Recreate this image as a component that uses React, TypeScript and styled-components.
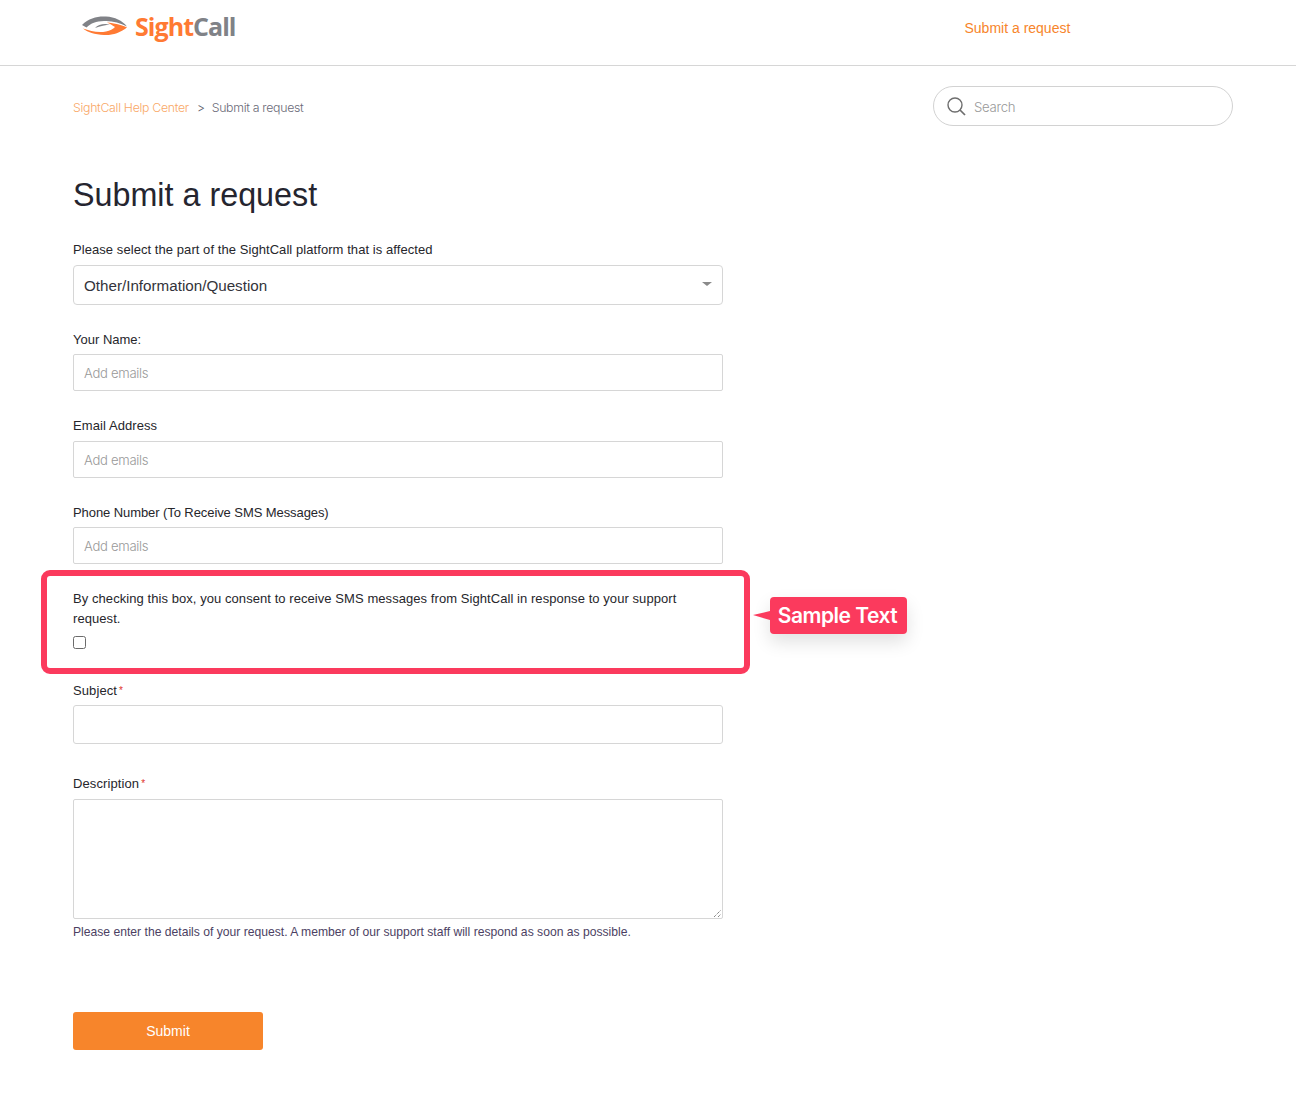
import React from "react";
import styled, { createGlobalStyle } from "styled-components";

const Global = createGlobalStyle`
  html, body { margin: 0; padding: 0; background: #fff; }
  body { font-family: "Liberation Sans", Arial, sans-serif; color: #26262b; }
  * { box-sizing: border-box; }
`;

const Page = styled.div`
  width: 1296px;
  height: 1096px;
  overflow: hidden;
`;

const Header = styled.header`
  height: 66px;
  border-bottom: 1px solid #d6d6d6;
  display: flex;
  align-items: flex-start;
  padding-left: 82px;
`;

const Logo = styled.a`
  display: flex;
  align-items: center;
  gap: 7px;
  height: 52px;
  width: 882.5px;
`;

const LogoText = styled.span`
  font-family: "Open Sans", sans-serif;
  font-weight: 700;
  font-size: 25px;
  letter-spacing: -0.95px;
  line-height: 30px;
  color: #ff7a33;
`;

const LogoGrey = styled.span`
  color: #808287;
`;

const NavLink = styled.a`
  font-size: 14px;
  line-height: 16px;
  color: #f7852b;
  margin-top: 20px;
`;

const Crumbs = styled.div`
  display: flex;
  justify-content: space-between;
  align-items: flex-start;
  padding: 20px 63px 0 73px;
`;

const Trail = styled.div`
  display: flex;
  align-items: center;
  font-family: Inter, sans-serif;
  font-weight: 300;
  font-size: 12.3px;
  height: 42px;
  letter-spacing: -0.3px;
`;

const CrumbLink = styled.a`
  color: #f9a867;
`;

const CrumbSep = styled.span`
  color: #5a5a68;
  margin: 0 7px 0 8px;
`;

const CrumbCurrent = styled.span`
  color: #6a6a78;
`;

const SearchBox = styled.div`
  width: 300px;
  height: 40px;
  border: 1px solid #d2d2d2;
  border-radius: 20px;
  display: flex;
  align-items: center;
  gap: 8px;
  padding-left: 13px;
`;

const SearchText = styled.span`
  font-family: Inter, sans-serif;
  font-weight: 300;
  font-size: 13.2px;
  letter-spacing: -0.3px;
  color: #999;
  position: relative;
  top: 1px;
`;

const Main = styled.main`
  padding: 0 0 0 73px;
  width: 723px;
`;

const Title = styled.h1`
  margin: 48px 0 0;
  font-weight: 400;
  font-size: 32.3px;
  line-height: 38px;
  color: #25252f;
`;

const Field = styled.div<{ $top: number }>`
  margin-top: ${(p) => p.$top}px;
`;

const Label = styled.label<{ $gap?: number; $track?: number }>`
  display: block;
  font-size: 13px;
  line-height: 15px;
  letter-spacing: ${(p) => p.$track ?? 0}px;
  color: #26262b;
  margin-bottom: ${(p) => p.$gap ?? 8}px;
`;

const Star = styled.span`
  color: #e0322b;
  font-size: 10px;
  margin-left: 2px;
  vertical-align: 1px;
`;

const SelectBox = styled.div`
  height: 40px;
  border: 1px solid #d6d6d6;
  border-radius: 4px;
  display: flex;
  align-items: center;
  justify-content: space-between;
  padding: 0 10px;
  font-size: 15.2px;
  color: #33333a;
`;

const Caret = styled.span`
  width: 0;
  height: 0;
  border-left: 5px solid transparent;
  border-right: 5px solid transparent;
  border-top: 4px solid #8a8a8a;
  margin-top: -2px;
`;

const Input = styled.div<{ $h: number; $radius?: number }>`
  height: ${(p) => p.$h}px;
  border: 1px solid #d6d6d6;
  border-radius: ${(p) => p.$radius ?? 2}px;
  display: flex;
  align-items: center;
  padding: 0 10px;
`;

const Placeholder = styled.span`
  font-family: Inter, sans-serif;
  font-weight: 300;
  font-size: 13.1px;
  letter-spacing: -0.3px;
  color: #999;
`;

const ConsentField = styled.div`
  position: relative;
  margin-top: 25px;
`;

const ConsentText = styled.p`
  margin: 0;
  font-size: 13px;
  line-height: 20px;
  letter-spacing: 0.065px;
  color: #26262b;
`;

const Check = styled.span`
  display: block;
  width: 13px;
  height: 13px;
  margin-top: 7px;
  border: 1px solid #6b6b6b;
  border-radius: 2.5px;
  background: #fff;
`;

const Highlight = styled.div`
  position: absolute;
  left: -32px;
  top: -19px;
  width: 709px;
  height: 104px;
  border: 6px solid #fb3a5d;
  border-radius: 9px;
  pointer-events: none;
`;

const Tag = styled.div`
  position: absolute;
  left: 697px;
  top: 8px;
  width: 137px;
  height: 37px;
  padding-right: 2px;
  border-radius: 4px;
  background: #fb3a5d;
  color: #fff;
  font-family: Inter, sans-serif;
  font-weight: 600;
  font-size: 21px;
  letter-spacing: -0.5px;
  display: flex;
  align-items: center;
  justify-content: center;
  white-space: nowrap;
  box-shadow: 0 8px 18px rgba(0, 0, 0, 0.12);

  &::before {
    content: "";
    position: absolute;
    left: -17px;
    top: 14px;
    border-style: solid;
    border-width: 4px 17px 5px 0;
    border-color: transparent #fb3a5d transparent transparent;
  }
`;

const Area = styled.div`
  position: relative;
  height: 120px;
  border: 1px solid #d6d6d6;
  border-radius: 2px;
`;

const Grip = styled.svg`
  position: absolute;
  right: 0;
  bottom: 0;
`;

const Help = styled.p`
  margin: 6px 0 0;
  font-size: 12.15px;
  line-height: 14px;
  color: #4c3f63;
`;

const Submit = styled.button`
  display: block;
  margin-top: 73px;
  width: 190px;
  height: 38px;
  border: 0;
  border-radius: 3px;
  background: #f7852b;
  color: #fff;
  font-family: inherit;
  font-size: 14px;
`;

export default function App() {
  return (
    <Page>
      <Global />
      <Header>
        <Logo>
          <svg width="46" height="20" viewBox="0 0 46 20">
            <path d="M0 9C7 2 16 0 24 .6 33 1.200 40 4.500 45 10.500 38 7 30 4.500 22 5 14 5.500 9 7 4.500 11.500Z" fill="#808287" />
            <path d="M13 12C16 8.500 22 7 28 8.500 24 9 18 10 13 12Z" fill="#808287" />
            <path d="M1 12.500C8 15 16 17 24 15.500 28 14.500 31 13 33 11 30 9 28 8 25 6.500 32 7 40 9 45 11.500 38 17 30 19.500 22 19 13 18.500 5 16 1 12.500Z" fill="#ff7a33" />
          </svg>
          <LogoText>
            Sight<LogoGrey>Call</LogoGrey>
          </LogoText>
        </Logo>
        <NavLink>Submit a request</NavLink>
      </Header>
      <Crumbs>
        <Trail>
          <CrumbLink>SightCall Help Center</CrumbLink>
          <CrumbSep>&gt;</CrumbSep>
          <CrumbCurrent>Submit a request</CrumbCurrent>
        </Trail>
        <SearchBox>
          <svg width="19" height="19" viewBox="0 0 19 19" fill="none" stroke="#6e6e6e" strokeWidth="1.400">
            <circle cx="8" cy="8" r="7" />
            <path d="M13 13l5 5" strokeWidth="1.700" />
          </svg>
          <SearchText>Search</SearchText>
        </SearchBox>
      </Crumbs>
      <Main>
        <Title>Submit a request</Title>
        <Field $top={28}>
          <Label $track={0.065}>Please select the part of the SightCall platform that is affected</Label>
          <SelectBox>
            Other/Information/Question
            <Caret />
          </SelectBox>
        </Field>
        <Field $top={27}>
          <Label $gap={7}>Your Name:</Label>
          <Input $h={37}><Placeholder>Add emails</Placeholder></Input>
        </Field>
        <Field $top={27}>
          <Label $track={0.08}>Email Address</Label>
          <Input $h={37}><Placeholder>Add emails</Placeholder></Input>
        </Field>
        <Field $top={27}>
          <Label $gap={7} $track={-0.08}>Phone Number (To Receive SMS Messages)</Label>
          <Input $h={37}><Placeholder>Add emails</Placeholder></Input>
        </Field>
        <ConsentField>
          <ConsentText>
            By checking this box, you consent to receive SMS messages from SightCall in response to your support request.
          </ConsentText>
          <Check />
          <Highlight />
          <Tag>Sample Text</Tag>
        </ConsentField>
        <Field $top={34}>
          <Label $gap={7} $track={0.1}>Subject<Star>*</Star></Label>
          <Input $h={39} $radius={3} />
        </Field>
        <Field $top={32}>
          <Label $track={0.1}>Description<Star>*</Star></Label>
          <Area>
            <Grip width="9" height="9" viewBox="0 0 9 9" stroke="#555" strokeWidth="1" strokeDasharray="1 1">
              <path d="M1 8L8 1M5 8l3-3" />
            </Grip>
          </Area>
          <Help>Please enter the details of your request. A member of our support staff will respond as soon as possible.</Help>
        </Field>
        <Submit>Submit</Submit>
      </Main>
    </Page>
  );
}
